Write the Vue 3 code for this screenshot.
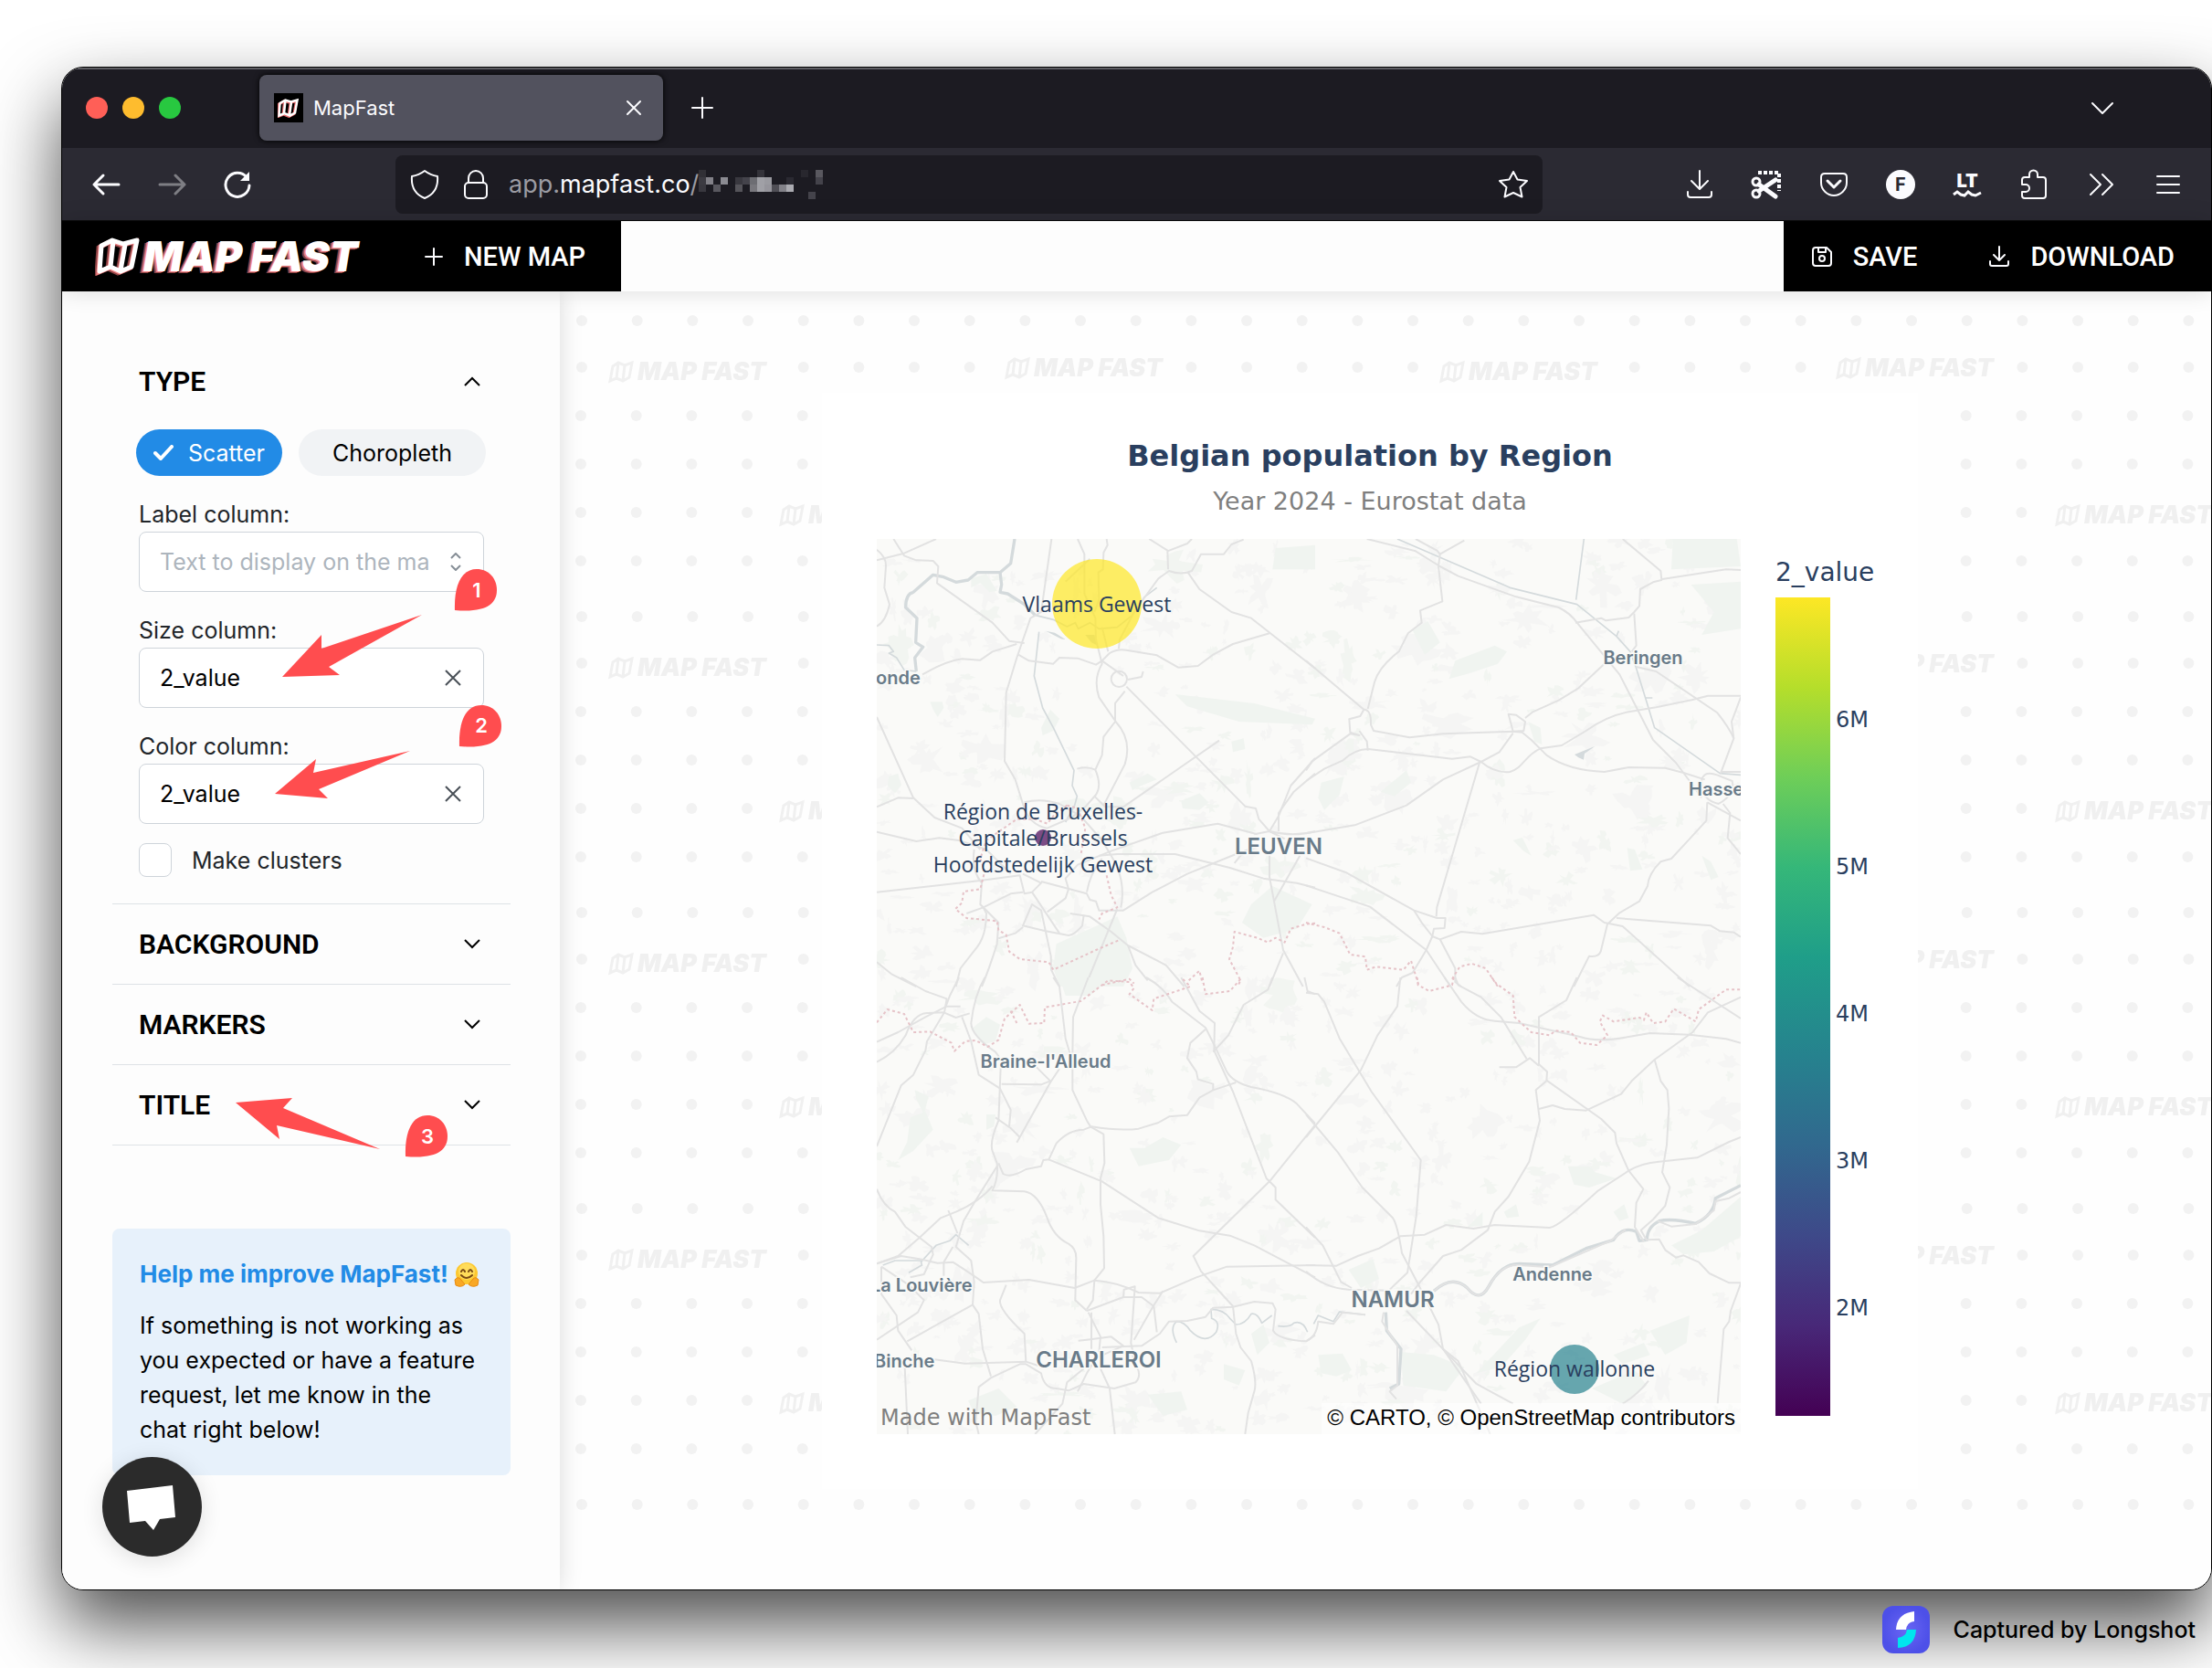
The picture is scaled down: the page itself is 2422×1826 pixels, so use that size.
<script setup>
import { ref } from 'vue'

const sizeColumn = ref('2_value')
const colorColumn = ref('2_value')
const labelColumn = ref('')
const clusters = ref(false)
const sections = ['BACKGROUND', 'MARKERS', 'TITLE']
const ticks = ['6M', '5M', '4M', '3M', '2M']

// blurred part of the address: column, row, opacity
const pixels = [
  [0, 0, 0.1], [0, 1, 0.16], [0, 2, 0.14], [1, 1, 0.5], [2, 2, 0.3], [3, 1, 0.55], [5, 1, 0.14], [5, 2, 0.28],
  [6, 1, 0.2], [7, 1, 0.4], [7, 2, 0.45], [8, 0, 0.12], [8, 1, 0.65], [8, 2, 0.65], [9, 1, 0.62], [9, 2, 0.6],
  [10, 2, 0.25], [11, 2, 0.5], [12, 1, 0.08], [12, 2, 0.7], [14, 0, 0.06], [16, 0, 0.3], [16, 1, 0.2], [15, 3, 0.2],
]

// repeating backdrop tile
const dots = []
const rowY = [32, 83, 136, 189, 242, 295]
rowY.forEach((y, r) => {
  for (let c = 0; c < 15; c++) {
    const x = 24 + c * 60.67
    if (r === 1 && ((c > 0 && c < 4) || (c > 7 && c < 11))) continue
    if (r === 4 && ((c > 3 && c < 7) || (c > 11))) continue
    dots.push([r > 1 ? x - 1 : x, y])
  }
})
const marks = [[54, 98], [488, 94], [241, 255], [728, 255]]

// land cover patches
let seed = 20240
const rnd = () => {
  seed = (seed * 16807) % 2147483647
  return seed / 2147483647
}
const patches = []
for (let i = 0; i < 1150; i++) {
  const cx = rnd() * 946
  const cy = rnd() * 980
  const big = rnd() > 0.88 ? 24 : 10
  const rx = 3 + rnd() * big
  const ry = 2 + rnd() * big * 0.8
  const n = 18
  let p = ''
  for (let k = 0; k < n; k++) {
    const a = (k / n) * Math.PI * 2
    const q = 0.3 + rnd()
    p += `${(cx + Math.cos(a) * rx * q).toFixed(1)},${(cy + Math.sin(a) * ry * q).toFixed(1)} `
  }
  patches.push({ p, green: rnd() > 0.75 })
}

// the base map is split in four sheets, three units to a pixel
const sheets = [
  {
    t: 'translate(-20 -30) scale(0.33333)',
    roads: [
      'M60 160L150 137L255 90', 'M115 90L150 145L190 160L245 162L262 180L258 235L440 365L495 425L545 432', 'M60 125Q92 150 90 180L85 250L102 305Q90 360 60 377',
      'M634 90L600 330L565 350L520 480L485 595L480 820L515 880L540 960Q560 1030 620 1040L700 1005', 'M720 90L742 140L742 270L778 350L780 420L800 500Q770 550 790 610L845 690Q900 750 875 830L805 965',
      'M815 90L818 110L805 135L803 190L788 200L790 290L775 330', 'M210 535Q290 490 340 484L400 488L440 460L520 435', 'M525 470L560 490L640 500L660 480L720 482L780 503L800 490',
      'M800 490L825 465Q850 450 880 455L980 472L1050 512L1115 507L1165 470L1230 435L1350 400', 'M820 460L800 380', 'M855 450L858 420L885 370L905 330L985 220L1020 195Q1060 210 1095 195L1125 140L1200 140L1225 108L1265 92',
      'M955 90L1015 128L1017 190M1015 130L1080 105L1095 90', 'M1082 200L1120 255L1225 330L1290 350L1500 515', 'M800 490L870 540M830 550A25 25 0 1 1 882 550A25 25 0 1 1 830 550M885 552L930 543L935 525', 'M880 575L1270 968L1305 975L1315 1010L1350 1050',
      'M875 590L843 630L843 690L805 740L800 800L778 848Q800 900 780 930L745 970L700 1005', 'M718 845Q750 835 778 848', 'M60 675L180 940L250 1005L340 1040L400 1110', 'M60 970L130 940L180 942', 'M60 1052L190 1083L265 1072L330 1080L420 1110L500 1190',
      'M870 970L1185 752', 'M775 935L810 970L870 970', 'M545 955Q600 940 660 960L730 1000L800 1080L830 1130Q880 1210 862 1300', 'M60 1250L400 1212L530 1195L545 1255L570 1250L600 1220L540 1190', 'M380 1110Q370 1180 405 1220L400 1290L460 1350L455 1420Q430 1500 405 1560',
      'M540 1250L500 1255L410 1300L355 1320', 'M410 1300L420 1320Q420 1390 390 1430L335 1500L320 1560', 'M570 1250L660 1385', 'M600 1215L750 1255L760 1275L780 1280L790 1310L870 1310L965 1250L1080 1190L1240 1125L1310 1100',
      'M620 1315L680 1270L690 1240L680 1205L720 1160L830 1115L1000 1055L1180 1025L1310 1060', 'M790 1130L850 1125L1040 1125L1220 1170L1330 1205L1440 1220L1500 1235', 'M750 1250Q760 1190 800 1140', 'M740 1325L735 1360Q710 1390 690 1392L615 1378L540 1360L570 1290L600 1310L632 1460L633 1505L660 1560',
      'M460 1402L515 1385L540 1365', 'M695 1320L760 1330L830 1380L885 1425L910 1490L950 1540', 'M850 1305L745 1560', 'M885 1425L1010 1490L1070 1560', 'M60 1480L110 1520L190 1560', 'M1350 1050L1380 1000L1420 900L1500 810', 'M1380 1050L1380 990L1430 920L1500 860',
      'M1350 1050Q1430 1070 1500 1050', 'M1350 1130L1350 1200L1365 1280L1395 1440L1460 1560', 'M1450 1130L1365 1280', 'M1395 1450L1350 1560', 'M1235 1155L1255 1130L1310 1100', 'M680 230L760 155', 'M1300 1060L1350 1050L1400 1075',
    ],
    water: ['M60 438L100 440L115 460L100 465L125 480L150 520L190 525', 'M580 340L640 355L685 378L712 365L722 385L760 365L790 385L850 380L900 340L940 280L980 250', 'M593 395L577 540L605 645L640 710L708 850L702 900L718 935L710 965L680 1020'],
    rivers: ['M190 525L185 480L212 445L188 430L192 350L155 315Q155 270 180 265L245 208L280 215L320 232L360 225L390 200L465 200L500 170L513 90', 'M465 200L470 240L465 265L490 270L545 305L580 340'],
    lakes: ['M615 392L645 398L680 420L665 418Z', 'M745 405L775 405L785 440L765 430Z'],
    woods: ['M235 625L275 625L280 645L260 675L245 650Z', 'M370 220L420 205L455 260L430 265L400 235L370 250Z', 'M600 710L630 650L660 680L640 720L605 735Z', 'M100 870L130 860L140 900L120 925L95 900Z', 'M1370 120L1500 110L1500 190L1360 190Z', 'M1060 950L1120 925L1150 955L1120 980L1065 975Z', 'M640 1500L650 1420L850 1330L880 1400L900 1500L870 1560L660 1560Z', 'M1290 1290L1360 1230L1490 1290L1440 1370L1330 1400L1260 1350Z', 'M1040 600L1300 630L1500 680L1490 700L1250 690L1080 640Z', 'M1225 755L1265 745L1270 780L1230 790Z', 'M890 890L950 860L980 880L930 900L900 915Z'],
    border: ['M685 965L640 1000L620 1025L580 1010L520 1010L420 1080L400 1140L415 1180L400 1240L345 1248L340 1285L318 1305L355 1335L455 1345L460 1375L485 1390L495 1445L530 1470L625 1480L640 1505L780 1440L855 1408', 'M685 965L720 975L745 1040L730 1130M815 1195L830 1260L850 1300L800 1320L790 1340', 'M1500 1352L1470 1355L1420 1370L1400 1415L1370 1400L1345 1415L1310 1400L1235 1380L1230 1430L1218 1470L1255 1540L1245 1560', 'M800 1555L890 1535L905 1550M1085 1540L1120 1508L1130 1550'],
  },
  {
    t: 'translate(470 -30) scale(0.33333)',
    roads: [
      'M200 90L360 130L440 180L500 212L690 280L830 315Q870 335 890 365L1030 535L1140 750L1215 825L1260 885L1300 940', 'M360 90L430 128L440 140L435 180L448 295L375 325L380 365L335 400L305 460Q240 510 225 560L203 648', 'M440 140L520 95',
      'M0 490L130 600L190 650L178 672L142 682L145 725L175 735L145 730L20 820L0 850', 'M190 650Q215 650 213 700L222 720L340 742L450 730L680 722L710 725L740 750L790 800Q860 850 980 855L1060 840L1180 842L1240 858L1310 880', 'M175 720L200 755L203 785', 'M0 885L60 845L120 818Q160 780 205 780L480 812L540 805L575 822Q620 860 670 855C710 845 720 800 770 778L840 768L920 720Q990 670 1060 658L1150 643L1270 618L1320 605L1428 605',
      'M680 722L665 665L690 668L720 690L715 720L680 722', 'M720 678L745 658L830 620L895 580L980 500', 'M680 728L635 790L575 822L450 880L330 965L160 1030L0 1057', 'M570 825L430 1300L428 1330', 'M885 365L970 350L985 358L1060 348L1078 330L1095 310L1098 255L1140 232L1168 225L1165 195L1040 90', 'M1170 222L1380 190L1428 192', 'M1078 335L1085 440L1070 460', 'M1085 510L1150 525L1350 660Q1390 710 1405 745L1362 860', 'M1428 610L1398 690L1405 745',
      'M1300 880Q1310 850 1350 865L1400 885Q1410 930 1355 960Q1310 950 1300 910Z', 'M1362 855L1428 855', 'M1318 955L1315 1015L1260 1075L1200 1140L1165 1150Q1125 1190 1122 1230L1095 1280L1030 1318L990 1355L968 1445Q960 1465 930 1460L880 1560', 'M1318 955L1428 1015M1370 960L1393 990L1385 1072L1428 1125', 'M0 1138L130 1185L355 1310L430 1335L458 1335L455 1368L420 1370L415 1395L440 1405L510 1380L580 1387L945 1325L980 1350L1040 1362L1260 1560', 'M1020 1335L1330 1360L1360 1378L1405 1382L1428 1397', 'M0 1228L210 1298L395 1440L475 1560', 'M355 1310L380 1350L415 1395L395 1440L350 1515L315 1530L297 1560', 'M440 1405L490 1500L490 1545L510 1560',
    ],
    water: ['M300 90L670 250L890 305L1020 410L1065 460L1085 515L1145 710L1360 860L1428 865', 'M913 90L887 290', 'M1020 410L1027 392M1115 612L1138 612'],
    rivers: [],
    lakes: ['M882 798L950 770L915 795L912 815L895 808Z'],
    woods: ['M1205 90L1415 90L1428 180L1200 190Z', 'M1265 240L1428 230L1428 385L1300 405L1340 330Z', 'M470 550L490 490L620 440L660 460L630 500L540 530Z', 'M245 920L330 850L345 890L290 935Z', 'M50 890L125 870L110 930L60 980L40 940Z', 'M680 1080L710 1070L740 1130L715 1115Z', 'M1300 1130L1330 1150L1355 1200L1330 1210Z', 'M730 690L770 710L775 765L750 755Z', 'M350 390L400 360L440 430L390 470Z', 'M1055 1105L1080 1110L1105 1175L1065 1180Z'],
    border: ['M0 1350L60 1365L110 1385L145 1455L195 1462L200 1505L230 1495L320 1505L345 1475L370 1555', 'M480 1535L505 1495L545 1485L590 1500L630 1560'],
  },
  {
    t: 'translate(-20 480) scale(0.33333)',
    roads: [
      'M140 0L220 45L290 70L282 115L225 210L220 240L180 320L140 355L60 555', 'M330 0L300 60L285 100', 'M415 0Q380 60 370 150Q370 190 450 245L468 270L460 470Q430 540 440 570L455 610Q460 660 440 700L545 703Q590 710 620 790Q640 850 690 875Q715 890 715 920L712 1060L750 1095', 'M60 212L130 180L220 130L290 95L335 95M60 278Q120 250 155 190Q180 120 225 117L280 115L320 132L365 118',
      'M340 130L370 210L395 320L465 365L500 435L495 490', 'M470 350L600 352L630 340L585 295M660 300L630 345L520 542', 'M450 460L500 495L530 525', 'M640 0L660 30L680 200L703 280L703 370L750 470L762 490L805 515L808 610L795 660L795 745L805 850L807 955L775 995L770 1060L750 1090', 'M755 0L705 130L703 250', 'M460 610L475 645Q500 660 550 630L600 620L607 600L625 598L650 545Q690 500 740 500L765 490Q860 505 920 497L985 477L1020 457L1080 452L1120 395L1165 370L1210 355L1240 345',
      'M625 598L800 670L985 790L1120 832L1220 848L1300 880L1500 985', 'M455 620L380 740L345 800L320 885L370 930L380 1000L375 1075L395 1105L408 1220L435 1310', 'M440 685Q400 735 320 770L270 790L200 855L130 915L60 940', 'M60 695Q80 750 120 770L155 820L240 885L245 910L215 975L170 985', 'M60 940L140 915L200 925L260 938L310 935Q380 980 410 1002L560 993L710 1020L775 995Q850 1000 920 1035L990 1037L1110 985L1210 950L1500 945',
      'M295 765L325 840M310 885L280 935L280 980', 'M75 950L75 1040L125 1110L130 1160L175 1225', 'M75 950L165 1010L215 1060L195 1100L60 1190', 'M160 1195L375 1075', 'M250 1255L350 1268L550 1262L590 1275', 'M395 1500L385 1460L395 1345L435 1315L530 1270L550 1270L600 1300Q610 1350 650 1350L690 1357L740 1335L840 1350L910 1330Q930 1310 915 1280L900 1240', 'M152 1280L162 1500', 'M485 1010L465 1060Q460 1090 545 1170L550 1262', 'M750 1095L870 1050L930 1050L970 1080L980 1165M870 1050L872 1025L908 1015L900 1130L895 1200L905 1250', 'M1000 1030L968 1080L905 1190', 'M722 1193L750 1190L830 1180L870 1210L780 1250L750 1300L720 1360', 'M740 1285L685 1330L670 1400L580 1500', 'M795 1285L825 1350L842 1500', 'M755 1100L795 1180L790 1230M765 1100L765 1220', 'M800 1215L930 1210L990 1170L1020 1130L1080 1128L1140 1115L1165 1085L1230 1082L1300 1065L1360 1070L1370 1090L1362 1160Q1380 1190 1470 1195L1500 1175',
      'M945 0Q1000 30 1030 80L1140 165L1175 235L1210 310Q1230 345 1290 360Q1400 380 1440 415L1500 480', 'M1060 0L1120 110L1170 150L1168 240L1230 375L1340 660L1370 690L1370 730L1500 855', 'M1360 0L1345 40L1265 90L1215 190L1165 245', 'M1140 170L1090 215L1080 265L1110 310L1115 335L1165 350L1165 370', 'M1500 485L1350 670L1100 915L1125 965L1230 1080L1240 1170L1255 1215L1290 1260Q1310 1330 1300 1360L1280 1430L1270 1500', 'M1465 0L1475 45L1500 55',
    ],
    water: ['M80 945L120 930L205 930L208 945L165 970M205 935L255 880L300 865L320 845L362 880', 'M1045 1200Q1020 1150 1045 1130Q1070 1130 1090 1160Q1140 1210 1175 1165Q1190 1130 1160 1120L1158 1090Q1200 1090 1220 1120L1240 1140Q1270 1140 1290 1105Q1310 1100 1325 1135L1358 1110', 'M1378 1145Q1420 1150 1430 1135Q1460 1125 1475 1165'],
    rivers: [],
    lakes: [],
    woods: ['M370 170L420 130L465 155L450 210L410 220Z', 'M130 600L160 540L170 460L220 440L245 500L180 570Z', 'M185 370L230 390L215 450L190 400Z', 'M660 0L830 0L760 60L680 60Z', 'M890 560L940 560L1000 525L1060 550L1020 600L920 620Z', 'M1290 1170L1330 1140L1350 1200L1310 1240Z', 'M420 450L450 450L445 490L420 500Z', 'M360 1390L460 1350L520 1410L450 1440L380 1430Z', 'M950 1370L1060 1360L1080 1420L1000 1440Z', 'M1200 1270L1270 1290L1250 1340L1200 1320Z'],
    border: ['M60 148L95 105L150 120L180 180L235 178L305 215L315 242L350 210L385 207L425 228L460 205L480 135L530 90L560 152L610 150L612 98L730 78L820 10L890 15L905 35L890 55L965 108L970 70L1090 30L1060 0', 'M500 110L520 150M1130 0L1140 55L1220 45L1260 0'],
  },
  {
    t: 'translate(470 480) scale(0.33333)',
    roads: [
      'M0 50L40 55L60 80L110 200L215 375L377 600L362 785L333 970L275 1025', 'M310 0L300 95L235 190L180 305L0 525', 'M0 450L105 575L185 690L285 790Q300 810 315 905L370 1010L435 1140L450 1220L575 1400', 'M0 820L55 880L115 1000L150 1020', 'M0 945L100 947L170 915L240 890L310 850L390 845L460 813L550 825L620 813L800 822Q830 820 960 700L1060 635Q1100 610 1160 605L1285 592L1390 540L1428 525', 'M0 965Q60 1020 140 1025L270 1028', 'M455 0L510 80Q560 140 620 143L700 150L900 195Q960 215 1060 195L1130 183L1260 188L1380 202L1428 215',
      'M490 0L500 25L575 65L640 130L725 268', 'M890 0L855 75L765 130L765 285L792 310L790 340L755 370L768 470L733 605L665 720L620 770L597 830L510 895L450 915L375 1000L345 1040', 'M635 295L690 295L735 265L765 290', 'M765 432L810 420L850 432L920 437L1035 383L1070 340L1145 270L1270 180L1320 115L1428 65', 'M790 338L970 465L1015 510L1020 545L1060 635L1108 695L1085 740L1080 820L1110 868', 'M1145 270L1165 340L1187 370L1192 430L1185 550L1170 640L1195 690L1180 750L1140 795L1100 830L1120 865', 'M1220 0L1428 135', 'M1120 862L1160 860L1180 895L1215 920L1240 913L1290 935L1325 972L1390 1003L1428 1003', 'M1428 1005L1395 1095L1390 1130L1372 1155L1352 1400', 'M330 1095L440 1210L560 1335L680 1400', 'M450 1220L500 1260L605 1500', 'M0 1195Q35 1180 40 1130L90 1138L120 1100L195 1108', 'M255 1100L250 1130L300 1210L300 1340L275 1360L297 1385', 'M1125 1325Q1090 1370 1040 1400', 'M420 1030Q480 975 530 1020Q570 1070 600 1015Q640 940 700 945L800 952L1000 865L1050 828', 'M1155 800L1200 818L1280 810L1340 765L1345 735L1390 725L1428 705',
    ],
    water: ['M25 1138L40 1110L90 1130L110 1098L195 1108'],
    rivers: ['M262 1100L265 1160L312 1220L305 1335L275 1350', 'M420 1030Q480 975 530 1020Q570 1070 600 1015Q640 940 700 940L810 945L920 890L1010 862Q1040 815 1085 835L1095 865L1120 862Q1120 820 1160 800Q1200 790 1280 808Q1340 780 1345 725L1428 683'],
    lakes: [],
    woods: ['M1200 880L1300 830L1428 720L1428 850L1340 900L1240 910Z', 'M860 620L930 620L950 640L1020 660L930 690L880 680Z', 'M40 1240L120 1235L150 1290L100 1310L50 1300Z', 'M310 1230L420 1240L520 1280L460 1360L320 1340Z', 'M140 960L220 925L240 990L180 1020Z', 'M1010 770L1045 745L1060 790L1030 800Z', 'M530 820L580 770L580 815Z', 'M700 1150L770 1120L720 1190L640 1280L560 1300Z', 'M1130 1160L1260 1110L1250 1200L1180 1240Z', 'M1010 1240L1110 1200L1130 1240L1040 1270Z', 'M940 1350L1080 1290L1120 1340L1040 1400Z', 'M650 770L690 745L700 785L660 790Z'],
    border: ['M365 0L368 25L405 45L480 25L485 0', 'M610 0L625 20L680 60L685 130L740 180L800 190L820 175L870 180L900 215L955 222L990 190L965 145L975 125L1010 145L1095 132L1110 140L1118 115L1140 150L1180 145L1208 103L1280 145L1290 105L1380 40L1428 40'],
  },
]

const towns = [
  { n: 'Geel', x: 660, y: 0, s: 20 }, { n: 'Beringen', x: 839, y: 137, s: 20 }, { n: 'Hasse', x: 889, y: 281, s: 20, a: 'start' }, { n: 'onde', x: -1, y: 159, s: 20, a: 'start' },
  { n: 'LEUVEN', x: 440, y: 345, s: 24 }, { n: "Braine-l'Alleud", x: 185, y: 579, s: 20 }, { n: 'La Louvière', x: -7, y: 824, s: 20, a: 'start' }, { n: 'Binche', x: -3, y: 907, s: 20, a: 'start' },
  { n: 'CHARLEROI', x: 243, y: 907, s: 24 }, { n: 'NAMUR', x: 565, y: 841, s: 24 }, { n: 'Andenne', x: 740, y: 812, s: 20 },
]
</script>

<template>
  <div class="desktop">
    <div class="window">
      <div class="tabbar">
        <span class="lights"><i class="red"></i><i class="amber"></i><i class="green"></i></span>
        <div class="tab">
          <span class="favicon">
            <svg width="24" height="22" viewBox="0 0 48 40"><path d="M5 10L17 3L29 7L43 3L38 31L27 37L15 32L3 37Z M17 3L14 32M30 8L26 36" fill="none" stroke="#e8686c" stroke-width="6" transform="translate(-2 2)" /><path d="M5 10L17 3L29 7L43 3L38 31L27 37L15 32L3 37Z M17 3L14 32M30 8L26 36" fill="none" stroke="#fff" stroke-width="5" /></svg>
          </span>
          <span class="tabname">MapFast</span>
          <button class="plain" aria-label="Close tab"><svg width="20" height="20" viewBox="0 0 20 20"><path d="M3 3L17 17M17 3L3 17" class="ln" /></svg></button>
        </div>
        <button class="plain newtab" aria-label="New tab"><svg width="26" height="26" viewBox="0 0 26 26"><path d="M13 2V24M2 13H24" class="ln" /></svg></button>
        <button class="plain alltabs" aria-label="All tabs"><svg width="26" height="16" viewBox="0 0 26 16"><path d="M2 3L13 14L24 3" class="ln" /></svg></button>
      </div>

      <div class="toolbar">
        <div class="nav">
          <button class="plain" aria-label="Back"><svg width="32" height="32" viewBox="0 0 32 32"><path d="M3 16H30M13 6L3 16L13 26" class="ln w3" /></svg></button>
          <button class="plain dim" aria-label="Forward"><svg width="32" height="32" viewBox="0 0 32 32"><path d="M3 16H30M20 6L30 16L20 26" class="ln w3" /></svg></button>
          <button class="plain" aria-label="Reload"><svg width="32" height="32" viewBox="0 0 32 32"><path d="M26 8A13 13 0 1 0 29 17" class="ln w3" /><path d="M29 2V12H19Z" fill="#fbfbfe" /></svg></button>
        </div>
        <div class="urlbar">
          <svg width="32" height="34" viewBox="0 0 32 34"><path d="M16 2C20 5 24 7 30 8C31 20 26 28 16 32C6 28 1 20 2 8C8 7 12 5 16 2Z" class="ln" /></svg>
          <svg width="28" height="34" viewBox="0 0 28 34"><rect x="2" y="15" width="24" height="17" rx="4" class="ln" /><path d="M6 15V10A8 8 0 0 1 22 10V15" class="ln" /></svg>
          <span class="url">app.<b>mapfast.co</b>/</span>
          <svg class="mask" width="138" height="32" viewBox="0 0 138 32"><rect v-for="(p, i) in pixels" :key="i" :x="p[0] * 8" :y="p[1] * 8" width="8" height="8" fill="#e8e8ee" :fill-opacity="p[2]" /></svg>
          <button class="plain star" aria-label="Bookmark"><svg width="34" height="32" viewBox="0 0 34 32"><path d="M17 2L21.500 10.500L32 12L24.500 19L26.500 29.500L17 25L7.500 29.500L9.500 19L2 12L12.500 10.500Z" class="ln" /></svg></button>
        </div>
        <div class="ext">
          <button class="plain" aria-label="Downloads"><svg width="32" height="32" viewBox="0 0 32 32"><path d="M16 1V20M7 12L16 21L25 12M3 24V27Q3 30 6 30H26Q29 30 29 27V24" class="ln" /></svg></button>
          <button class="plain" aria-label="Screenshot"><svg width="36" height="32" viewBox="0 0 36 32"><path d="M9 3H32V23" class="ln dash" /><circle cx="7" cy="13" r="4" class="ln w3" /><circle cx="7" cy="26" r="4" class="ln w3" /><path d="M10 16L28 29M10 23L28 11" class="ln w5" /></svg></button>
          <button class="plain" aria-label="Pocket"><svg width="32" height="32" viewBox="0 0 32 32"><path d="M6 4H26Q30 4 30 8V14C30 22 23 28 16 28S2 22 2 14V8Q2 4 6 4Z" class="ln" /><path d="M9 12L16 19L23 12" class="ln w3" /></svg></button>
          <button class="plain round" aria-label="Extension F">F</button>
          <button class="plain lt" aria-label="LanguageTool"><span>LT</span><svg width="32" height="8" viewBox="0 0 32 8"><path d="M1 5L5 2L9 5L13 6L17 2L21 5L25 6L31 3" fill="none" stroke="#fbfbfe" stroke-width="3" /></svg></button>
          <button class="plain" aria-label="Extensions"><svg width="32" height="34" viewBox="0 0 32 34"><path d="M3 12Q3 9 6 9H11V6A4 4 0 0 1 20 6V9H26Q29 9 29 12V29Q29 32 26 32H6Q3 32 3 29V25H7A4 4 0 0 0 7 17H3Z" class="ln" /></svg></button>
          <button class="plain" aria-label="More tools"><svg width="28" height="28" viewBox="0 0 28 28"><path d="M2 3L13 14L2 25M15 3L26 14L15 25" class="ln" /></svg></button>
          <button class="plain" aria-label="Menu"><svg width="26" height="22" viewBox="0 0 26 22"><path d="M1 2H25M1 11H25M1 20H25" class="ln" /></svg></button>
        </div>
      </div>

      <header class="appbar">
        <div class="black left">
          <a class="logo" href="#" aria-label="Map Fast">
            <svg width="50" height="42" viewBox="0 0 50 42">
              <path d="M7 9L19 3L31 7L46 3L40 32L28 37L17 32L5 37Z M20 4L17 32M33 8L28 36" fill="none" stroke="#8a4143" stroke-width="5" transform="translate(-3 2)" />
              <path d="M7 9L19 3L31 7L46 3L40 32L28 37L17 32L5 37Z M20 4L17 32M33 8L28 36" fill="none" stroke="#f08284" stroke-width="5" transform="translate(-1 1)" />
              <path d="M7 9L19 3L31 7L46 3L40 32L28 37L17 32L5 37Z M20 4L17 32M33 8L28 36" fill="none" stroke="#fff" stroke-width="5" stroke-linejoin="round" />
            </svg>
            <span>MAP FAST</span>
          </a>
          <button class="plain act"><svg width="22" height="22" viewBox="0 0 22 22"><path d="M11 2V20M2 11H20" class="ln" /></svg>NEW MAP</button>
        </div>
        <div class="black right">
          <button class="plain act"><svg width="24" height="24" viewBox="0 0 24 24"><path d="M2 5Q2 2 5 2H17L22 7V19Q22 22 19 22H5Q2 22 2 19ZM8 2V7H16V2" class="ln" /><circle cx="12" cy="14" r="3" class="ln" /></svg>SAVE</button>
          <button class="plain act"><svg width="24" height="24" viewBox="0 0 24 24"><path d="M12 1V16M6 10L12 16L18 10M2 17V20Q2 22 4 22H20Q22 22 22 20V17" class="ln" /></svg>DOWNLOAD</button>
        </div>
      </header>

      <div class="body">
        <aside class="side">
          <section class="group">
            <button class="plain head">TYPE<svg width="18" height="11" viewBox="0 0 18 11"><path d="M1 10L9 2L17 10" class="dk" /></svg></button>
            <div class="chips">
              <button class="plain chip on"><svg width="22" height="17" viewBox="0 0 22 17"><path d="M2 9L8 15L20 2" fill="none" stroke="#fff" stroke-width="4" stroke-linecap="round" stroke-linejoin="round" /></svg>Scatter</button>
              <button class="plain chip">Choropleth</button>
            </div>
            <label for="lab">Label column:</label>
            <div class="field">
              <input id="lab" v-model="labelColumn" role="combobox" placeholder="Text to display on the ma" />
              <svg width="12" height="20" viewBox="0 0 12 20"><path d="M1 6L6 1L11 6M1 14L6 19L11 14" fill="none" stroke="#868e96" stroke-width="2" /></svg>
            </div>
            <label for="siz">Size column:</label>
            <div class="field">
              <input id="siz" v-model="sizeColumn" role="combobox" />
              <button class="plain" aria-label="Clear size column"><svg width="18" height="18" viewBox="0 0 18 18"><path d="M1 1L17 17M17 1L1 17" fill="none" stroke="#495057" stroke-width="2" /></svg></button>
            </div>
            <label for="col">Color column:</label>
            <div class="field">
              <input id="col" v-model="colorColumn" role="combobox" />
              <button class="plain" aria-label="Clear color column"><svg width="18" height="18" viewBox="0 0 18 18"><path d="M1 1L17 17M17 1L1 17" fill="none" stroke="#495057" stroke-width="2" /></svg></button>
            </div>
            <div class="check"><input id="clu" v-model="clusters" type="checkbox" /><label for="clu">Make clusters</label></div>
          </section>
          <section v-for="s in sections" :key="s" class="group">
            <button class="plain head">{{ s }}<svg width="18" height="11" viewBox="0 0 18 11"><path d="M1 1L9 9L17 1" class="dk" /></svg></button>
          </section>

          <div class="help">
            <h2>Help me improve MapFast!
              <svg width="28" height="28" viewBox="0 0 28 28"><circle cx="14" cy="13" r="12" fill="#fdc830" /><circle cx="14" cy="11" r="9" fill="#ffdc5a" /><path d="M8 11Q10 7 12 11M16 11Q18 7 20 11M8 15Q14 21 20 15" fill="none" stroke="#7a4a12" stroke-width="2" stroke-linecap="round" /><path d="M1 20Q4 16 7 19L12 25Q8 29 2 26ZM27 20Q24 16 21 19L16 25Q20 29 26 26Z" fill="#f9a825" stroke="#e88b10" /></svg>
            </h2>
            <p>If something is not working as you expected or have a feature request, let me know in the chat right below!</p>
          </div>

          <svg class="notes" width="545" height="1000" viewBox="68 319 545 1000">
            <g fill="#ff4d4f">
              <path d="M462 673L352 710L352 695L309 741L372 739L360 730Z" />
              <path d="M449 822L343 846L346 831L301 869L359 874L349 864Z" />
              <path d="M258 1207L320 1202L310 1213L416 1258L303 1232L306 1247Z" />
              <path v-for="b in [[498, 623], [503, 772], [444, 1221]]" :key="b[1]" :transform="`translate(${b[0]} ${b[1]})`" d="M0 45C-1 16 8 0 24 0C37 0 46 10 46 23C46 38 34 48 0 45Z" />
            </g>
            <text x="522" y="654">1</text><text x="527" y="802">2</text><text x="468" y="1252">3</text>
          </svg>
          <button class="plain chat" aria-label="Open chat"><svg width="56" height="52" viewBox="0 0 56 52"><path d="M0 8L50 2L53 37L36 39L29 51L20 41L3 43Z" fill="#fff" /></svg></button>
        </aside>

        <main class="stage">
          <svg class="backdrop" aria-hidden="true">
            <defs>
              <pattern id="tile" width="910" height="324" patternUnits="userSpaceOnUse">
                <circle v-for="(d, i) in dots" :key="i" :cx="d[0]" :cy="d[1]" r="6" fill="#f2f2f2" />
                <g v-for="m in marks" :key="m[0]" :transform="`translate(${m[0]} ${m[1]})`">
                  <path d="M4 -16L10 -20L17 -17L25 -20L22 -4L15 0L8 -3L1 0ZM10 -20L8 -3M17 -17L15 0" fill="none" stroke="#f0f0f0" stroke-width="3" />
                  <text x="31" y="-1" class="wm">MAP FAST</text>
                </g>
              </pattern>
            </defs>
            <rect width="100%" height="100%" fill="url(#tile)" />
          </svg>
          <figure class="plot">
            <h1>Belgian population by Region</h1>
            <p class="sub">Year 2024 - Eurostat data</p>
            <div class="chart">
              <div class="map">
                <svg width="946" height="980" viewBox="0 0 946 980">
                  <rect width="946" height="980" fill="#fafaf8" />
                  <polygon v-for="(p, i) in patches" :key="i" :points="p.p" :fill="p.green ? '#f2f5f1' : '#f5f5f4'" />
                  <g v-for="(s, i) in sheets" :key="i" :transform="s.t" fill="none" stroke-linejoin="round">
                    <path v-for="d in s.woods" :key="d" :d="d" fill="#f0f4f0" />
                    <path v-for="d in s.lakes" :key="d" :d="d" fill="#d4dadc" />
                    <path v-for="d in s.water" :key="d" :d="d" stroke="#d4dadc" stroke-width="5" />
                    <path v-for="d in s.rivers" :key="d" :d="d" stroke="#d4dadc" stroke-width="10" />
                    <path v-for="d in s.roads" :key="d" :d="d" stroke="#e2e2e2" stroke-width="6" />
                    <path v-for="d in s.border" :key="d" :d="d" stroke="#e6c3c8" stroke-width="6" stroke-dasharray="9 9" />
                  </g>
                  <text v-for="t in towns" :key="t.n" :x="t.x" :y="t.y" :font-size="t.s" :text-anchor="t.a || 'middle'" class="town">{{ t.n }}</text>
                  <circle cx="241" cy="71" r="49" fill="#fde725" fill-opacity=".7" />
                  <circle cx="182" cy="327" r="9" fill="#440154" fill-opacity=".7" />
                  <circle cx="764" cy="909" r="27" fill="#26828e" fill-opacity=".7" />
                  <g class="pin">
                    <text x="241" y="80">Vlaams Gewest</text>
                    <text x="182" y="307">Région de Bruxelles-</text>
                    <text x="182" y="336">Capitale/Brussels</text>
                    <text x="182" y="365">Hoofdstedelijk Gewest</text>
                    <text x="764" y="917">Région wallonne</text>
                  </g>
                </svg>
                <span class="made">Made with MapFast</span>
                <span class="credit">© CARTO, © OpenStreetMap contributors</span>
              </div>
              <div class="legend">
                <div class="ltitle">2_value</div>
                <div class="scale">
                  <div class="bar"></div>
                  <ul><li v-for="t in ticks" :key="t">{{ t }}</li></ul>
                </div>
              </div>
            </div>
          </figure>
        </main>
      </div>
    </div>

    <footer class="credits">
      <svg width="52" height="52" viewBox="0 0 52 52"><defs><radialGradient id="g"><stop offset="0" stop-color="#6a66f4" /><stop offset="1" stop-color="#4d50e8" /></radialGradient></defs><rect width="52" height="52" rx="12" fill="url(#g)" /><path d="M35 6V17Q27 18 26 26H15Q16 8 35 6Z" fill="#fff" /><path d="M17 46V35Q26 34 27 26H37Q36 45 17 46Z" fill="#00e5ee" /></svg>
      <span>Captured by Longshot</span>
    </footer>
  </div>
</template>

<style>
body { margin: 0; background: #fff; }
</style>

<style scoped>
* { box-sizing: border-box; }
.desktop { font-family: Inter, sans-serif; padding: 73px 0 0 67px; overflow: hidden; color: #000; }
.window { border: 1px solid #000; border-radius: 24px; overflow: hidden; box-shadow: 0 38px 80px rgba(0, 0, 0, .7); background: #fff; }
.plain { border: 0; background: none; padding: 0; margin: 0; font: inherit; color: inherit; display: flex; align-items: center; }
svg { display: block; flex: none; }
.ln { fill: none; stroke: #fbfbfe; stroke-width: 2; stroke-linejoin: round; stroke-linecap: round; }
.w3 { stroke-width: 3; }
.w5 { stroke-width: 5; }
.dash { stroke-width: 4; stroke-linecap: butt; stroke-dasharray: 4 2; }
.dk { fill: none; stroke: #000; stroke-width: 2; }

.tabbar { height: 88px; background: #1c1b22; border-top: 2px solid #5d5d62; display: flex; align-items: center; padding: 0 106px 2px 26px; }
.lights { display: flex; gap: 16px; width: 190px; }
.lights i { width: 24px; height: 24px; border-radius: 50%; }
.red { background: #ff5f57; }
.amber { background: #febc2e; }
.green { background: #28c840; }
.tab { width: 442px; height: 72px; border-radius: 8px; background: #52525e; box-shadow: 0 0 6px #000; display: flex; align-items: center; padding: 0 22px 0 16px; color: #fbfbfe; font-size: 22px; }
.favicon { width: 32px; height: 32px; background: #000; display: flex; align-items: center; justify-content: center; }
.tabname { flex: 1; padding-left: 11px; }
.newtab { margin-left: 30px; }
.alltabs { margin-left: auto; }

.toolbar { height: 80px; background: #2b2a33; border-bottom: 1px solid #0c0c0d; display: flex; align-items: center; padding: 0 31px 0 32px; }
.nav { display: flex; gap: 40px; width: 333px; }
.dim { opacity: .4; }
.urlbar { flex: 1; height: 64px; border-radius: 8px; background: #1c1b22; display: flex; align-items: center; padding: 0 15px 0 16px; }
.urlbar svg + svg { margin-left: 26px; }
.url { color: #9b9ba3; font-size: 27px; margin-left: 22px; }
.url b { color: #fbfbfe; font-weight: 400; }
.star { margin-left: auto; }
.ext { width: 701px; padding-left: 156px; display: flex; align-items: center; justify-content: space-between; }
.ext .plain { width: 32px; justify-content: center; }
.ext .round { height: 32px; border-radius: 50%; background: #fbfbfe; color: #2b2a33; font-weight: 700; font-size: 20px; }
.lt { flex-direction: column; color: #fbfbfe; font-weight: 900; font-size: 20px; line-height: 20px; }

.appbar { height: 77px; display: flex; justify-content: space-between; background: #fdfdfd; box-shadow: 0 0 24px rgba(0, 0, 0, .14); position: relative; z-index: 2; }
.black { background: #000; color: #fff; display: flex; align-items: center; }
.left { width: 612px; padding-left: 36px; }
.logo { display: flex; align-items: center; color: #fff; text-decoration: none; width: 360px; font: italic 900 45px/50px Inter, sans-serif; gap: 3px; white-space: nowrap; text-shadow: -2px 1px #f08284, -4px 2px #8a4143; }
.act { font: 500 29px/34px Roboto, sans-serif; gap: 22px; }
.right { gap: 78px; padding: 0 40px 0 30px; }

.body { display: flex; align-items: stretch; }
.side { width: 545px; flex: none; padding: 55px 54px 120px 55px; background: #fdfdfd; position: relative; box-shadow: 0 0 24px rgba(0, 0, 0, .14); z-index: 1; font-size: 25px; }
.group { border-bottom: 1px solid #dee2e6; padding: 0 29px; }
.head { width: 100%; height: 87px; justify-content: space-between; font: 600 30px/34px Roboto, sans-serif; padding-right: 4px; }
.chips { display: flex; gap: 18px; margin: 9px -2px 0 -3px; }
.chip { height: 51px; border-radius: 26px; background: #f1f3f5; justify-content: center; flex: 205; }
.chip.on { background: #228be6; color: #fff; flex: 160; gap: 16px; }
label { color: #212529; }
.group > label { display: block; line-height: 38px; margin-top: 23px; }
.field { height: 66px; border: 1px solid #ced4da; border-radius: 8px; background: #fff; display: flex; align-items: center; padding: 0 24px 0 22px; }
.field input { flex: 1; min-width: 0; border: 0; background: none; outline: 0; padding: 0; font: inherit; color: #000; }
.field input::placeholder { color: #adb5bd; opacity: 1; }
.check { display: flex; align-items: center; gap: 22px; margin: 21px 0 29px; }
.check input { appearance: none; width: 36px; height: 37px; margin: 0; border: 1px solid #ced4da; border-radius: 8px; background: #fff; }
.help { margin-top: 91px; background: #e7f1fb; border-radius: 8px; padding: 30px 30px 31px; }
.help h2 { margin: 0; color: #228be6; font-size: 26px; line-height: 40px; font-weight: 700; display: flex; align-items: center; gap: 6px; white-space: nowrap; }
.help p { margin: 17px 0 0; line-height: 38px; }
.notes { position: absolute; left: 0; top: 0; pointer-events: none; }
.notes text { fill: #fff; font-size: 22px; font-weight: 600; text-anchor: middle; }
.chat { position: absolute; left: 44px; bottom: 36px; width: 109px; height: 109px; border-radius: 50%; background: #2b2b2b; justify-content: center; box-shadow: 0 4px 24px rgba(0, 0, 0, .12); }

.stage { flex: 1; min-width: 0; position: relative; display: flex; justify-content: center; padding: 111px 34px 110px 0; background: #fefefe; }
.backdrop { position: absolute; left: 0; top: 0; width: 100%; height: calc(100% - 60px); }
.wm { font: italic 900 27px Inter, sans-serif; fill: #f0f0f0; }
.plot { position: relative; margin: 0; width: 1200px; height: 1200px; background: #fff; padding: 47px 0 0 60px; font-family: Verdana, "DejaVu Sans", sans-serif; color: #2a3f5f; }
.plot h1 { margin: 0 60px 0 0; font-size: 32px; line-height: 44px; text-align: center; }
.sub { margin: 0 60px 13px 0; font-size: 27px; line-height: 56px; text-align: center; color: #7f7f7f; }
.chart { display: flex; gap: 38px; }
.map { position: relative; width: 946px; height: 980px; overflow: hidden; }
.town { font-family: Inter, sans-serif; font-weight: 600; fill: #697b89; paint-order: stroke; stroke: #fafaf8; stroke-width: 3px; }
.pin { font-family: "Open Sans", sans-serif; font-size: 23px; fill: #2a3f5f; text-anchor: middle; }
.made { position: absolute; left: 4px; bottom: 1px; font-size: 24px; line-height: 34px; color: #7f7f7f; }
.credit { position: absolute; right: 0; bottom: 0; padding: 0 6px 2px; font: 24px/32px "Liberation Sans", Arial, sans-serif; color: #000; background: rgba(255, 255, 255, .5); }
.legend { padding-top: 19px; }
.ltitle { font-size: 28px; line-height: 36px; margin-bottom: 9px; }
.scale { display: flex; gap: 6px; }
.bar { width: 60px; height: 896px; background: linear-gradient(#fde725, #b5de2b 11%, #6ece58 22%, #35b779 33%, #1f9e89 44%, #26828e 56%, #31688e 67%, #3e4989 78%, #482878 89%, #440154); }
.scale ul { list-style: none; margin: 0; padding: 54px 0 0; font-size: 24px; line-height: 161px; }
.credits { position: relative; height: 86px; display: flex; align-items: center; justify-content: flex-end; gap: 26px; padding-right: 18px; font-size: 25px; font-weight: 500; }
</style>
